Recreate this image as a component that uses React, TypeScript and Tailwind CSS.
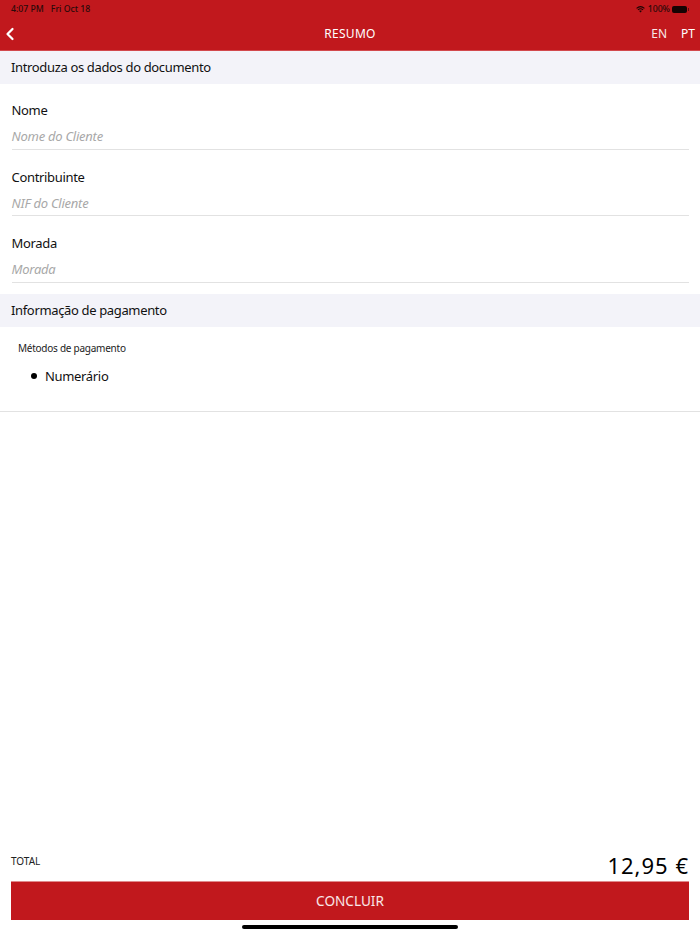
import { ChevronLeft } from "lucide-react";

function SectionTitle({ title }: { title: string }) {
  return (
    <div className="h-[33px] bg-[#f3f3f9] px-[11px] pt-[1px] flex items-center text-[13px] tracking-[-0.35px] text-[#111]">
      {title}
    </div>
  );
}

function Field({ label, placeholder }: { label: string; placeholder: string }) {
  return (
    <div className="mx-[11.5px] h-[66.4px] border-b border-[#e2e2e2] pt-[15.8px]">
      <div className="h-[22px] leading-[22px] text-[13px] tracking-[-0.33px] text-[#111]">{label}</div>
      <div className="mt-[4px] h-[22px] leading-[22px] text-[13px] tracking-[-0.25px] italic text-[#a8a8a8]">
        {placeholder}
      </div>
    </div>
  );
}

export default function App() {
  return (
    <div className="relative h-[934px] w-[700px] flex flex-col bg-white overflow-hidden font-['Noto_Sans',sans-serif]">
      <header className="h-[50.5px] shrink-0 bg-[#c1181d] border-b border-[#d2494d]">
        <div className="h-[17px] pt-[2px] pl-[11px] pr-[11px] flex items-center justify-between text-[8.7px] font-medium text-[#2a0a0a]">
          <div className="flex gap-[7px]">
            <span>4:07 PM</span>
            <span>Fri Oct 18</span>
          </div>
          <div className="flex items-center gap-[2px]">
            <svg className="mr-[1px]" width="9" height="7" viewBox="0 0 11 8" fill="none" stroke="#1a0505" strokeWidth="1.4">
              <path d="M0.7 2.6C3.5 0.2 7.5 0.2 10.3 2.6" />
              <path d="M2.4 4.4C4.2 2.9 6.8 2.9 8.6 4.4" />
              <path d="M5.5 7.6L3.9 5.9C4.8 5.2 6.2 5.2 7.1 5.9Z" fill="#1a0505" stroke="none" />
            </svg>
            <span>100%</span>
            <div className="h-[7px] w-[15px] rounded-[2px] bg-[#150303]" />
            <div className="-ml-[1px] h-[3px] w-[1px] bg-[#5a1012]" />
          </div>
        </div>
        <div className="relative h-[33px] flex items-center justify-between pl-0 pr-[5px]">
          <ChevronLeft className="text-white" size={20} strokeWidth={2.7} />
          <div className="absolute inset-0 flex items-center justify-center text-[12px] text-white tracking-[0.3px]">
            RESUMO
          </div>
          <div className="flex gap-[14px] text-[12px] text-white">
            <span className="opacity-90">EN</span>
            <span>PT</span>
          </div>
        </div>
      </header>

      <SectionTitle title="Introduza os dados do documento" />
      <Field label="Nome" placeholder="Nome do Cliente" />
      <Field label="Contribuinte" placeholder="NIF do Cliente" />
      <Field label="Morada" placeholder="Morada" />

      <div className="mt-[11px]">
        <SectionTitle title="Informação de pagamento" />
      </div>

      <div className="h-[85.5px] border-b border-[#e2e2e2] pt-[13.5px] pl-[18px]">
        <div className="text-[10px] tracking-[-0.25px] leading-[16px] text-[#222]">Métodos de pagamento</div>
        <div className="mt-[10px] pl-[13px] flex items-center gap-[8px] text-[13px] tracking-[-0.33px] leading-[20px] text-[#111]">
          <span className="h-[6px] w-[6px] rounded-full bg-black" />
          Numerário
        </div>
      </div>

      <div className="flex-1" />

      <div className="px-[11px] pb-[14px]">
        <div className="flex items-start justify-between">
          <span className="mt-[3px] text-[10px] leading-[14px] text-[#222]">TOTAL</span>
          <span className="text-[22px] leading-[29px] tracking-[1px] text-black">12,95 €</span>
        </div>
        <button className="mt-[1px] h-[39px] w-full bg-[#c1181d] border-t border-[#e08a8c] text-[13.6px] text-white/90">
          CONCLUIR
        </button>
      </div>

      <div className="absolute bottom-[5px] left-[242px] h-[4px] w-[216px] rounded-full bg-black" />
    </div>
  );
}
